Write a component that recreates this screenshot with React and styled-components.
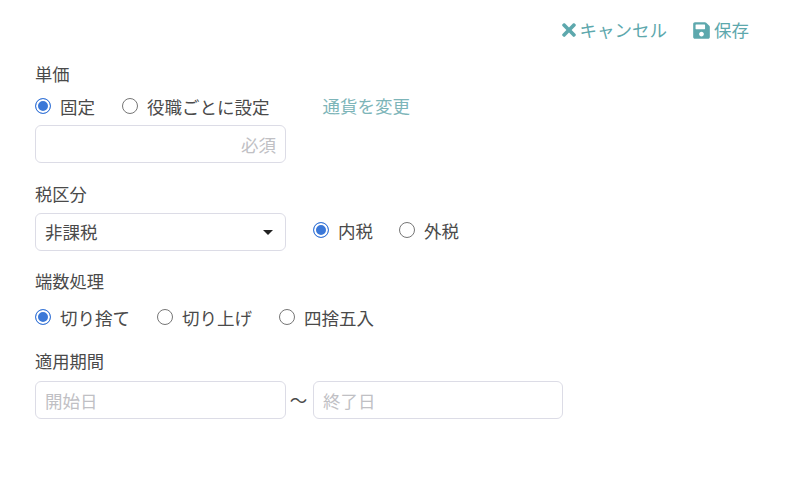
import React from "react";
import styled, { createGlobalStyle } from "styled-components";
import { FaTimes, FaSave } from "react-icons/fa";

const GlobalStyle = createGlobalStyle`
  html, body {
    margin: 0;
    padding: 0;
    background: #fff;
  }
  body {
    font-family: "Noto Sans CJK JP", "Noto Sans", sans-serif;
    color: #4a4a4a;
  }
`;

const Page = styled.div`
  width: 800px;
  height: 500px;
  box-sizing: border-box;
  padding: 19px 51px 0 35px;
  overflow: hidden;
`;

const Toolbar = styled.div`
  display: flex;
  justify-content: flex-end;
  align-items: center;
  gap: 25px;
  height: 22px;
  margin-bottom: 22px;
`;

const ActionButton = styled.a`
  display: flex;
  align-items: center;
  gap: ${(p) => p.$gap ?? 3}px;
  font-size: 17.5px;
  line-height: 22px;
  color: #5da8ad;
`;

const Label = styled.div`
  font-size: 17.25px;
  line-height: 22px;
  color: #4a4a4a;
  margin-top: ${(p) => p.$top || 0}px;
`;

const RadioRow = styled.div`
  display: flex;
  align-items: center;
  height: 24px;
  margin-top: ${(p) => p.$top || 0}px;
  margin-left: ${(p) => p.$left || 0}px;
  margin-bottom: ${(p) => p.$bottom || 0}px;
`;

const RadioItem = styled.label`
  display: flex;
  align-items: center;
  gap: 9px;
  margin-right: ${(p) => p.$gap ?? 27}px;
  font-size: 17.5px;
  line-height: 22px;
  color: #4a4a4a;
`;

const RadioMark = styled.span`
  box-sizing: border-box;
  width: 16px;
  height: 16px;
  margin-top: -2px;
  border-radius: 50%;
  border: 1px solid ${(p) => (p.$on ? "#3b78d8" : "#767676")};
  background: ${(p) => (p.$on ? "#3b78d8" : "#fff")};
  box-shadow: ${(p) => (p.$on ? "inset 0 0 0 2px #fff" : "none")};
`;

const ChangeLink = styled.a`
  font-size: 17.5px;
  line-height: 22px;
  color: #7db5b9;
  margin-left: 53px;
  margin-top: -2px;
`;

const Field = styled.div`
  box-sizing: border-box;
  width: ${(p) => p.$width || 251}px;
  height: 38px;
  display: flex;
  align-items: center;
  justify-content: ${(p) => (p.$right ? "flex-end" : "space-between")};
  padding: 0 9px ${(p) => (p.$value ? 2 : 0)}px;
  border: 1px solid #dcdce6;
  border-radius: 6px;
  background: #fff;
  font-size: 17.5px;
  color: ${(p) => (p.$value ? "#4a4a4a" : "#c0c0c4")};
`;

const Caret = styled.span`
  width: 0;
  height: 0;
  margin-right: 3px;
  margin-top: 2px;
  border-left: 5px solid transparent;
  border-right: 5px solid transparent;
  border-top: 5px solid #222;
`;

const Line = styled.div`
  display: flex;
  align-items: center;
  margin-top: ${(p) => p.$top || 0}px;
`;

const Tilde = styled.span`
  width: 27px;
  margin-left: -1px;
  margin-right: 1px;
  margin-bottom: 2px;
  text-align: center;
  font-size: 17.5px;
  color: #4a4a4a;
`;

const Radio = ({ on, gap, children }) => (
  <RadioItem $gap={gap}>
    <RadioMark $on={on} />
    {children}
  </RadioItem>
);

export default function App() {
  return (
    <>
      <GlobalStyle />
      <Page>
        <Toolbar>
          <ActionButton $gap={1}>
            <FaTimes size={20} />
            キャンセル
          </ActionButton>
          <ActionButton>
            <FaSave size={19} />
            保存
          </ActionButton>
        </Toolbar>

        <Label>単価</Label>
        <RadioRow $top={10}>
          <Radio on>固定</Radio>
          <Radio gap={0}>役職ごとに設定</Radio>
          <ChangeLink>通貨を変更</ChangeLink>
        </RadioRow>
        <Line $top={6}>
          <Field $right>必須</Field>
        </Line>

        <Label $top={20}>税区分</Label>
        <Line $top={8}>
          <Field $value>
            非課税
            <Caret />
          </Field>
          <RadioRow $left={27} $bottom={3}>
            <Radio on gap={26}>内税</Radio>
            <Radio>外税</Radio>
          </RadioRow>
        </Line>

        <Label $top={19}>端数処理</Label>
        <RadioRow $top={14}>
          <Radio on>切り捨て</Radio>
          <Radio>切り上げ</Radio>
          <Radio>四捨五入</Radio>
        </RadioRow>

        <Label $top={20}>適用期間</Label>
        <Line $top={9}>
          <Field>開始日</Field>
          <Tilde>〜</Tilde>
          <Field $width={250}>終了日</Field>
        </Line>
      </Page>
    </>
  );
}
